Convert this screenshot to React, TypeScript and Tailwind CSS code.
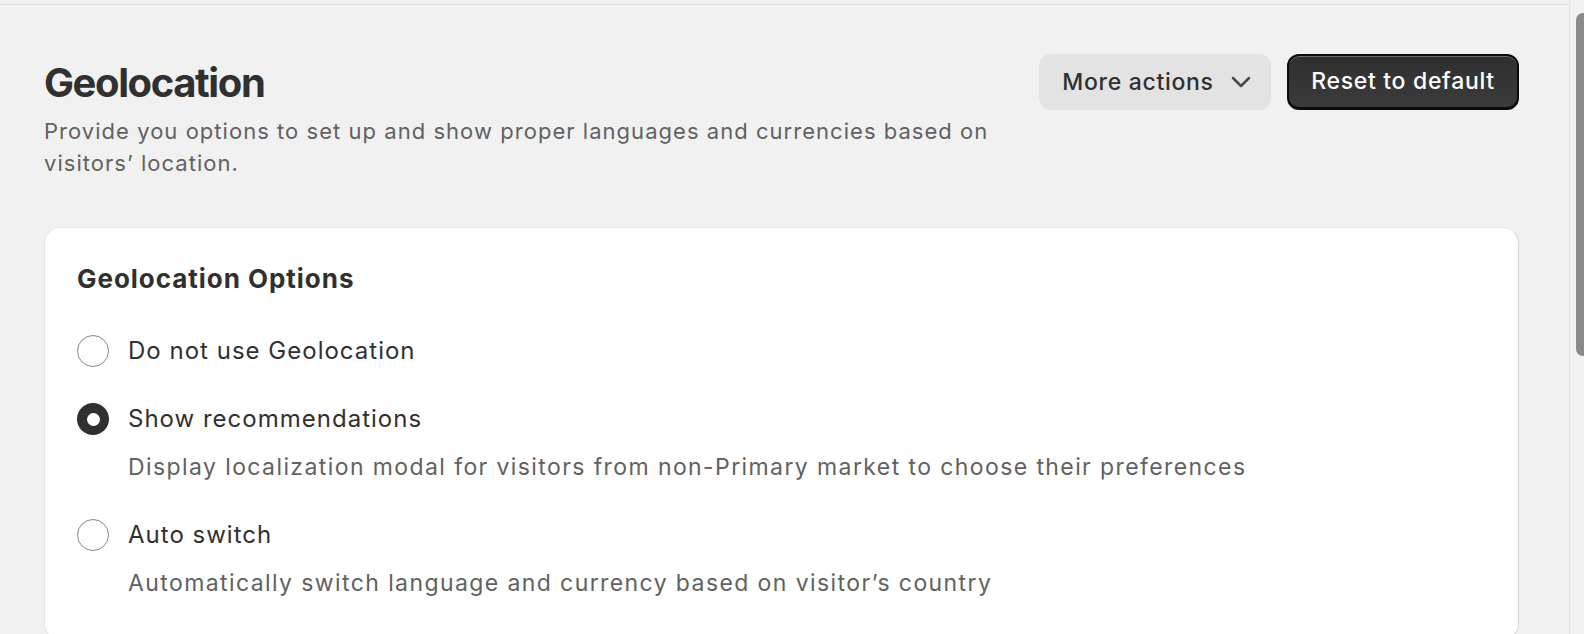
import React, { useState } from 'react';

interface GeoOption {
  id: string;
  label: string;
  description?: string;
}

const options: GeoOption[] = [
  { id: 'none', label: 'Do not use Geolocation' },
  {
    id: 'recommend',
    label: 'Show recommendations',
    description: 'Display localization modal for visitors from non-Primary market to choose their preferences',
  },
  {
    id: 'auto',
    label: 'Auto switch',
    description: 'Automatically switch language and currency based on visitor\u2019s country',
  },
];

const Radio: React.FC<{ checked: boolean }> = ({ checked }) =>
  checked ? (
    <span className="flex h-[32px] w-[32px] shrink-0 items-center justify-center rounded-full bg-[#303030]">
      <span className="h-[13px] w-[13px] rounded-full bg-white" />
    </span>
  ) : (
    <span className="h-[32px] w-[32px] shrink-0 rounded-full border border-[#8a8a8a] bg-[#fdfdfd]" />
  );

const App: React.FC = () => {
  const [selected, setSelected] = useState('recommend');

  return (
    <div className="flex h-[634px] w-full overflow-hidden bg-[#f1f1f1] font-['Inter',sans-serif] text-[#303030]">
      <div className="flex min-w-0 flex-1 flex-col">
        <div className="h-[5px] shrink-0 border-b border-[#e3e3e3]" />

        <div className="pl-[44px] pr-[50px] pt-[49px]">
          {/* Page header */}
          <div className="flex items-start justify-between">
            <div className="max-w-[960px]">
              <h1 className="text-[40px] font-bold leading-[58px] tracking-[-0.035em]">Geolocation</h1>
              <p className="mt-[3px] text-[22px] leading-[32px] tracking-[0.047em] text-[#616161]">
                Provide you options to set up and show proper languages and currencies based on visitors&#8217; location.
              </p>
            </div>
            <div className="flex items-center gap-[16px]">
              <button className="flex h-[56px] w-[232px] items-center justify-center gap-[17px] rounded-[12px] bg-[#e3e3e3] pl-[3px] text-[23px] font-medium tracking-[0.03em] text-[#303030]">
                More actions
                <svg width="20" height="12" viewBox="0 0 20 12" fill="none">
                  <path d="M2 2 L10 10 L18 2" stroke="#4a4a4a" strokeWidth="2.5" strokeLinecap="round" strokeLinejoin="round" />
                </svg>
              </button>
              <button className="flex h-[56px] w-[232px] items-center justify-center rounded-[12px] border-2 border-b-[3px] border-[#0b0b0b] bg-gradient-to-b from-[#2f2f2f] to-[#3b3b3b] text-[23px] font-medium tracking-[0.03em] text-white shadow-[inset_0_1px_0_0_#6b6b6b]">
                Reset to default
              </button>
            </div>
          </div>

          {/* Card */}
          <div className="mt-[48px] rounded-[16px] border border-[#e6e6e6] border-r-[#d6d6d6] bg-white px-[32px] pt-[32px] pb-[40px]">
            <h2 className="text-[26px] font-bold leading-[38px] tracking-[0.037em]">Geolocation Options</h2>
            <div className="mt-[37px] flex flex-col gap-[36px]">
              {options.map((opt) => (
                <div key={opt.id} className="cursor-pointer" onClick={() => setSelected(opt.id)}>
                  <div className="flex items-center gap-[19px]">
                    <Radio checked={selected === opt.id} />
                    <span className="text-[24px] leading-[32px] tracking-[0.042em]">{opt.label}</span>
                  </div>
                  {opt.description && (
                    <p className="mt-[16px] pl-[51px] text-[23px] leading-[32px] tracking-[0.061em] text-[#616161]">
                      {opt.description}
                    </p>
                  )}
                </div>
              ))}
            </div>
          </div>
        </div>
      </div>

      {/* Scrollbar */}
      <div className="w-[15px] shrink-0 overflow-hidden border-l border-[#e4e4e4] bg-[#f1f1f1]">
        <div className="ml-[6px] mt-[13px] h-[343px] w-[14px] rounded-full bg-[#8a8a8a]" />
      </div>
    </div>
  );
};

export default App;
